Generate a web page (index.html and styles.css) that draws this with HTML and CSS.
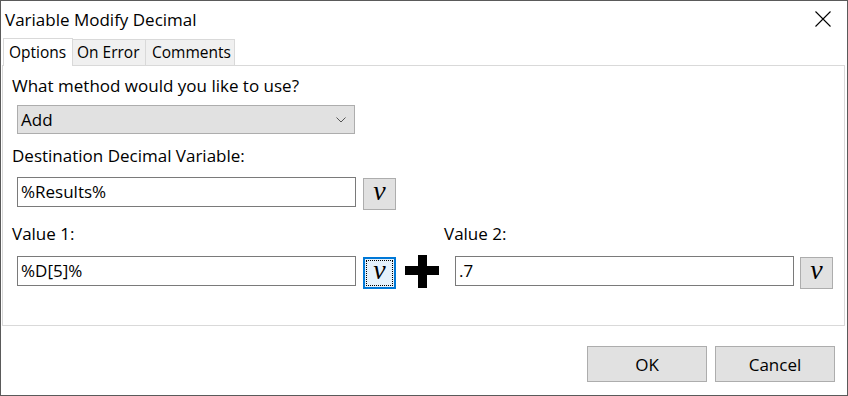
FILE: index.html
```html
<!DOCTYPE html>
<html>
<head>
<meta charset="utf-8">
<link rel="stylesheet" href="styles.css">
</head>
<body>
<div class="window">
  <div class="titlebar">
    <span class="title">Variable Modify Decimal</span>
    <svg class="close" width="16" height="16" viewBox="0 0 16 16"><path d="M0.5 0.5 L15.5 15.5 M15.5 0.5 L0.5 15.5" stroke="#000" stroke-width="1.1" fill="none"/></svg>
  </div>
  <div class="tabs">
    <div class="tab active">Options</div>
    <div class="tab">On Error</div>
    <div class="tab">Comments</div>
  </div>
  <div class="panel">
    <div class="label l1">What method would you like to use?</div>
    <div class="select">
      <span>Add</span>
      <svg class="chev" width="10" height="6" viewBox="0 0 10 6"><path d="M0.5 0.5 L5 5 L9.5 0.5" stroke="#555" stroke-width="1" fill="none"/></svg>
    </div>
    <div class="label l2">Destination Decimal Variable:</div>
    <div class="field-row">
      <div class="input">%Results%</div>
      <div class="vbtn"><span>v</span></div>
    </div>
    <div class="values">
      <div class="col">
        <div class="label l3">Value 1:</div>
        <div class="field-row">
          <div class="input">%D[5]%</div>
          <div class="vbtn focus"><span>v</span></div>
        </div>
      </div>
      <div class="plus"><span class="ph"></span><span class="pv"></span></div>
      <div class="col col2">
        <div class="label l3">Value 2:</div>
        <div class="field-row">
          <div class="input">.7</div>
          <div class="vbtn"><span>v</span></div>
        </div>
      </div>
    </div>
  </div>
  <div class="footer">
    <div class="btn">OK</div>
    <div class="btn">Cancel</div>
  </div>
</div>
</body>
</html>
```

FILE: styles.css
```css
html, body {
  margin: 0;
  padding: 0;
  background: #fff;
}
.window {
  width: 848px;
  height: 396px;
  box-sizing: border-box;
  border: 1px solid #5a5a5a;
  background: #fff;
  font-family: "Open Sans", "Noto Sans", sans-serif;
  font-size: 17px;
  color: #000;
  display: flex;
  flex-direction: column;
}
.titlebar {
  height: 36px;
  display: flex;
  align-items: center;
  justify-content: space-between;
  padding: 0 16px 0 4px;
  box-sizing: border-box;
}
.title {
  font-size: 17px;
}
.close {
  display: block;
}
.tabs {
  display: flex;
  align-items: flex-end;
  margin-left: 2px;
  height: 28px;
  font-size: 15.5px;
}
.tab {
  height: 26px;
  box-sizing: border-box;
  border: 1px solid #d9d9d9;
  border-bottom: none;
  border-left: none;
  background: #f0f0f0;
  padding: 0 0 0 4px;
  line-height: 24px;
  white-space: nowrap;
  overflow: hidden;
}
.tab:nth-child(2) { width: 73px; }
.tab:nth-child(3) { width: 89px; padding-left: 6px; }
.tab.active {
  height: 28px;
  width: 70px;
  border-left: 1px solid #d9d9d9;
  background: #fff;
  line-height: 27px;
  padding-left: 5px;
  position: relative;
  margin-bottom: -1px;
  z-index: 1;
}
.panel {
  margin-left: 1px;
  width: 843px;
  height: 261px;
  box-sizing: border-box;
  border: 1px solid #d9d9d9;
  padding: 0 0 0 9px;
}
.label {
  line-height: 20px;
}
.l1 { margin-top: 10px; }
.select {
  margin: 9px 0 0 5px;
  width: 338px;
  height: 29px;
  box-sizing: border-box;
  background: #e1e1e1;
  border: 1px solid #adadad;
  display: flex;
  align-items: center;
  justify-content: space-between;
  padding: 0 8px 0 3px;
}
.chev { display: block; }
.l2 { margin-top: 12px; }
.field-row {
  display: flex;
  align-items: flex-start;
  margin: 11px 0 0 5px;
}
.input {
  width: 339px;
  height: 30px;
  box-sizing: border-box;
  border: 1px solid #7a7a7a;
  background: #fff;
  padding: 0 3px;
  line-height: 28px;
}
.vbtn {
  width: 33px;
  height: 32px;
  box-sizing: border-box;
  margin: 1px 0 0 7px;
  background: #e1e1e1;
  border: 1px solid #adadad;
  display: flex;
  align-items: center;
  justify-content: center;
  font-family: "Liberation Serif", "DejaVu Serif", serif;
  font-style: italic;
  font-size: 28px;
  line-height: 1;
}
.vbtn span {
  position: relative;
  top: -3px;
}
.vbtn.focus {
  border: 2px solid #0078d7;
  outline: 1px dotted #000;
  outline-offset: -4px;
  background: #e5f1fb;
}
.values {
  display: flex;
  align-items: flex-end;
  margin-top: 14px;
}
.values .col .field-row {
  margin-top: 12px;
}
.col2 {
  margin-left: 5px;
}
.col2 .field-row {
  margin-left: 11px;
}
.col2 .vbtn {
  margin-left: 6px;
}
.plus {
  flex: none;
  width: 34px;
  height: 33px;
  margin: 0 0 0 9px;
  position: relative;
  top: -1px;
}
.ph, .pv {
  position: absolute;
  background: #000;
}
.ph {
  left: 0;
  top: 11px;
  width: 34px;
  height: 9px;
}
.pv {
  left: 13px;
  top: 0;
  width: 9px;
  height: 33px;
}
.footer {
  flex: 1;
  display: flex;
  justify-content: flex-end;
  gap: 8px;
  padding: 20px 12px 0 0;
}
.btn {
  width: 120px;
  height: 36px;
  box-sizing: border-box;
  background: #e1e1e1;
  border: 1px solid #adadad;
  display: flex;
  align-items: center;
  justify-content: center;
}
```
